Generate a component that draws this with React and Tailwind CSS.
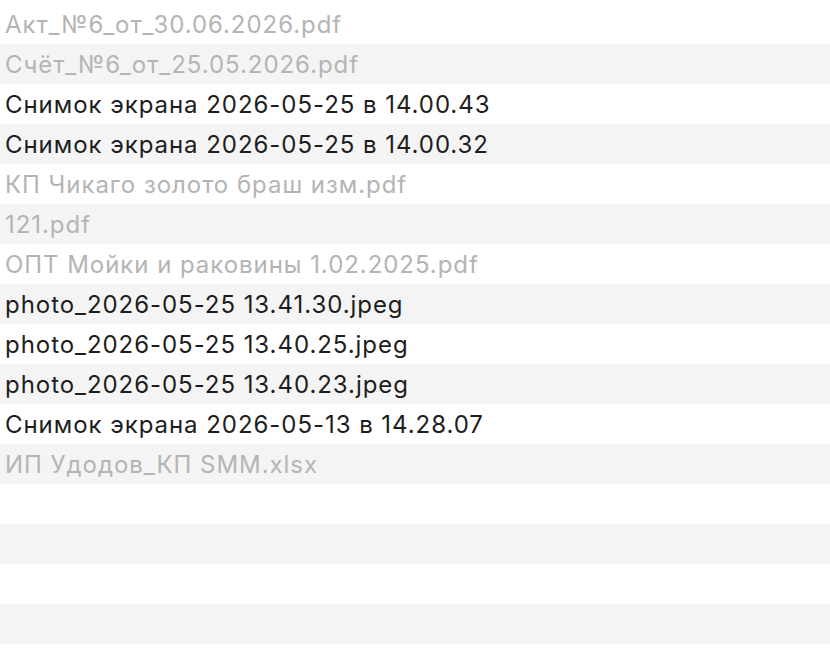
import React from 'react';

const files = [
  { name: 'Акт_№6_от_30.06.2026.pdf', dim: true },
  { name: 'Счёт_№6_от_25.05.2026.pdf', dim: true },
  { name: 'Снимок экрана 2026-05-25 в 14.00.43' },
  { name: 'Снимок экрана 2026-05-25 в 14.00.32' },
  { name: 'КП Чикаго золото браш изм.pdf', dim: true },
  { name: '121.pdf', dim: true },
  { name: 'ОПТ Мойки и раковины 1.02.2025.pdf', dim: true },
  { name: 'photo_2026-05-25 13.41.30.jpeg' },
  { name: 'photo_2026-05-25 13.40.25.jpeg' },
  { name: 'photo_2026-05-25 13.40.23.jpeg' },
  { name: 'Снимок экрана 2026-05-13 в 14.28.07' },
  { name: 'ИП Удодов_КП SMM.xlsx', dim: true },
  { name: '' },
  { name: '' },
  { name: '' },
  { name: '' },
  { name: '' },
];

function App() {
  return (
    <div className="h-[670px] w-[830px] overflow-hidden bg-white pt-1 font-['Inter',sans-serif]">
      {files.map((file, i) => (
        <div
          key={i}
          className={`flex h-10 items-center whitespace-nowrap px-[5px] pt-[2px] text-[24px] tracking-[0.95px] ${
            i % 2 === 1 ? 'bg-[#f4f4f4]' : 'bg-white'
          } ${file.dim ? 'text-[#b4b4b4]' : 'text-[#1d1d1d]'}`}
        >
          {file.name}
        </div>
      ))}
    </div>
  );
}

export default App;
